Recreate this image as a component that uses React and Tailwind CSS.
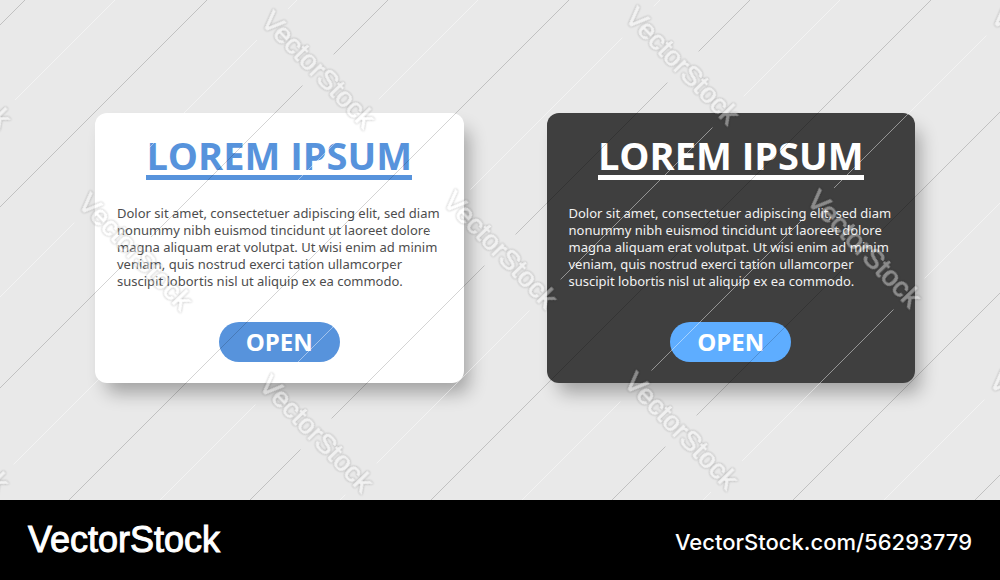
import React from "react";
import clsx from "clsx";

const BODY_TEXT =
  "Dolor sit amet, consectetuer adipiscing elit, sed diam nonummy nibh euismod tincidunt ut laoreet dolore magna aliquam erat volutpat. Ut wisi enim ad minim veniam, quis nostrud exerci tation ullamcorper suscipit lobortis nisl ut aliquip ex ea commodo.";

// x position where each diagonal meets the top edge
const DARK_LINES = [25, 207, 388, 569, 750, 931, 1112, 1293, 1475];
const LIGHT_LINES = [115, 297, 478, 660, 840, 1022, 1203, 1384];

// centers of the repeated wordmark
const MARKS = [
  [-46, 70],
  [318, 70],
  [682, 66],
  [1048, 66],
  [135, 252],
  [500, 250],
  [864, 249],
  [-48, 434],
  [316, 434],
  [681, 431],
  [1046, 430],
];

function Watermark() {
  return (
    <svg
      aria-hidden="true"
      className="pointer-events-none absolute inset-0 h-full w-full"
    >
      <mask id="mark-gaps" maskUnits="userSpaceOnUse" x="0" y="0" width="1600" height="1600">
        <rect width="1600" height="1600" fill="white" />
        {MARKS.map(([x, y]) => (
          <rect
            key={`${x}-${y}`}
            x="-80"
            y="-22"
            width="160"
            height="44"
            fill="black"
            transform={`translate(${x} ${y}) rotate(45)`}
          />
        ))}
      </mask>
      <g mask="url(#mark-gaps)" strokeWidth="1">
        {DARK_LINES.map((c) => (
          <line key={c} x1={c} y1="0" x2={c - 1600} y2="1600" stroke="black" strokeOpacity="0.17" />
        ))}
        {LIGHT_LINES.map((c) => (
          <line key={c} x1={c} y1="0" x2={c - 1600} y2="1600" stroke="white" strokeOpacity="0.45" />
        ))}
      </g>
      <g
        fill="white"
        stroke="white"
        strokeWidth="1"
        textAnchor="middle"
        className="font-['Liberation_Sans',Arial,sans-serif] text-[28px] opacity-40"
      >
        {MARKS.map(([x, y]) => (
          <text
            key={`${x}-${y}`}
            transform={`translate(${x} ${y}) rotate(46)`}
            y="9"
            className="drop-shadow-[0_0_1px_rgba(0,0,0,0.8)]"
          >
            VectorStock
          </text>
        ))}
      </g>
    </svg>
  );
}

function PromoCard({ dark = false }) {
  return (
    <section
      className={clsx(
        "flex flex-col items-center rounded-xl px-[22px] pt-[22px] pb-[21px] shadow-[8px_13px_18px_-3px_rgba(0,0,0,0.3)]",
        dark ? "bg-[#3f3f3f]" : "bg-white"
      )}
    >
      <h2
        className={clsx(
          "border-b-[5px] text-[38px] leading-10 font-bold",
          dark ? "border-white text-white" : "border-[#5793dc] text-[#5793dc]"
        )}
      >
        LOREM IPSUM
      </h2>
      <p
        className={clsx(
          "mt-[25px] w-full font-['Noto_Sans',sans-serif] text-[13px] leading-[17px]",
          dark ? "text-[#f2f2f2]" : "text-[#4d4d4d]"
        )}
      >
        {BODY_TEXT}
      </p>
      <button
        type="button"
        className={clsx(
          "mt-8 h-10 rounded-full px-[27px] text-[24px] leading-10 font-bold text-white",
          dark ? "bg-[#5eadff]" : "bg-[#5793dc]"
        )}
      >
        OPEN
      </button>
    </section>
  );
}

export default function App() {
  return (
    <div className="flex min-h-screen flex-col bg-[#e9e9e9] font-['Open_Sans','Noto_Sans',sans-serif]">
      <main className="relative flex flex-1 items-center overflow-hidden pr-[85px] pb-1 pl-[95px]">
        <div className="grid flex-1 grid-cols-2 gap-[83px]">
          <PromoCard />
          <PromoCard dark />
        </div>
        <Watermark />
      </main>
      <footer className="flex h-20 items-center justify-between bg-black px-7 text-white">
        <span className="font-['Liberation_Sans',Arial,sans-serif] text-[36px] [-webkit-text-stroke:1px_white]">
          VectorStock
        </span>
        <span className="pt-1 font-['Inter',sans-serif] text-[22px] font-medium">
          VectorStock.com/56293779
        </span>
      </footer>
    </div>
  );
}
